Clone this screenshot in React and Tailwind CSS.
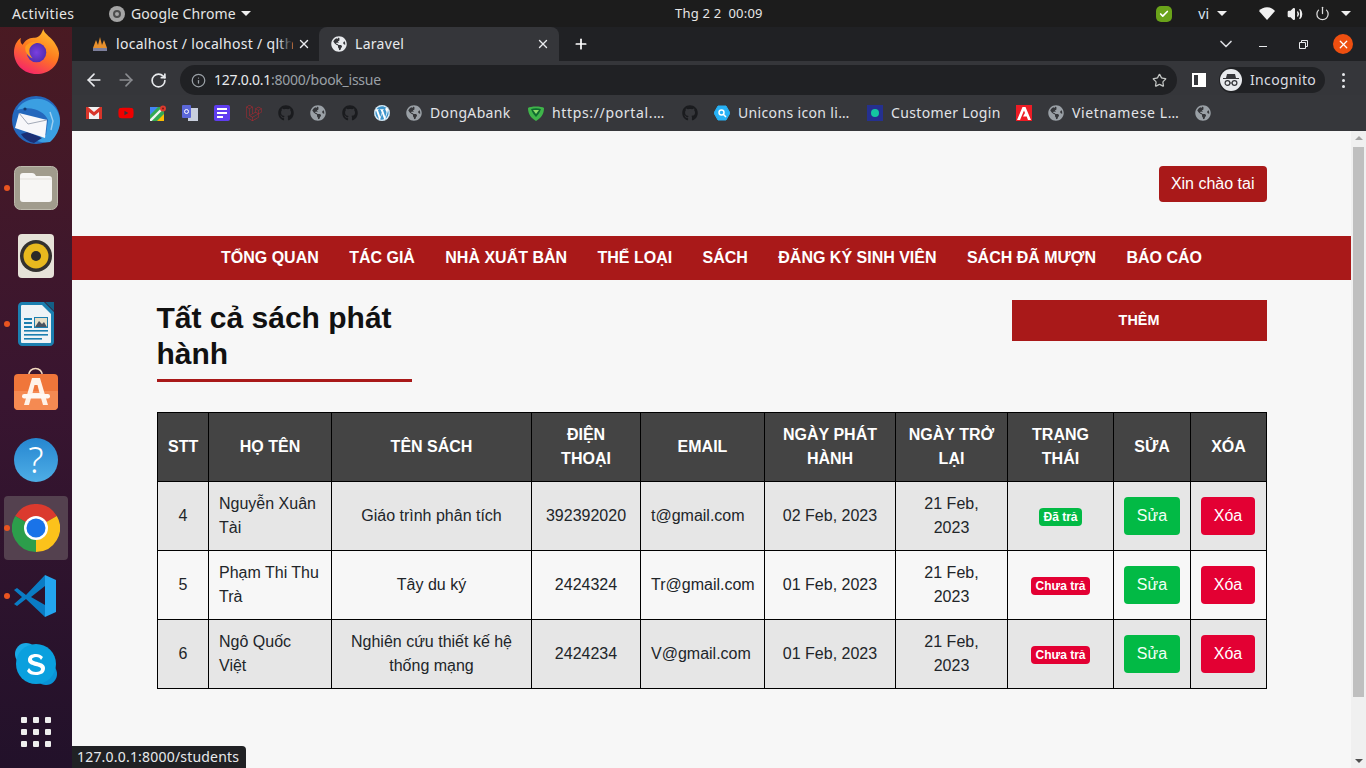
import { ArrowLeft, ArrowRight, RotateCw, Info, Star, X, Plus, ChevronDown, Volume2, Power, Check } from 'lucide-react'
import { FaGithub, FaGlobeAmericas, FaWordpress, FaYoutube } from 'react-icons/fa'
import { SiLaravel } from 'react-icons/si'

const navItems = ['TỔNG QUAN', 'TÁC GIẢ', 'NHÀ XUẤT BẢN', 'THỂ LOẠI', 'SÁCH', 'ĐĂNG KÝ SINH VIÊN', 'SÁCH ĐÃ MƯỢN', 'BÁO CÁO']

const headers = ['STT', 'HỌ TÊN', 'TÊN SÁCH', 'ĐIỆN THOẠI', 'EMAIL', 'NGÀY PHÁT HÀNH', 'NGÀY TRỞ LẠI', 'TRẠNG THÁI', 'SỬA', 'XÓA']
const colWidths = [51, 123, 200, 109, 124, 131, 112, 106, 77, 76]

const rows = [
  { id: 4, name: 'Nguyễn Xuân Tài', book: 'Giáo trình phân tích', phone: '392392020', email: 't@gmail.com', issued: '02 Feb, 2023', back: '21 Feb, 2023', done: true },
  { id: 5, name: 'Phạm Thi Thu Trà', book: 'Tây du ký', phone: '2424324', email: 'Tr@gmail.com', issued: '01 Feb, 2023', back: '21 Feb, 2023', done: false },
  { id: 6, name: 'Ngô Quốc Việt', book: 'Nghiên cứu thiết kế hệ thống mạng', phone: '2424234', email: 'V@gmail.com', issued: '01 Feb, 2023', back: '21 Feb, 2023', done: false },
]

function Caret() {
  return <span className="inline-block w-0 h-0 border-l-[5px] border-r-[5px] border-t-[5px] border-l-transparent border-r-transparent border-t-[#eeeeee]" />
}

function Globe({ color = '#9aa0a6' }) {
  return <FaGlobeAmericas size={16} color={color} />
}

function Firefox() {
  return (
    <svg width="45" height="45" viewBox="0 0 46 46" className="-mt-[2px]">
      <defs>
        <linearGradient id="ffOuter" x1="0.8" y1="0" x2="0.3" y2="1">
          <stop offset="0" stopColor="#ffc22e" />
          <stop offset="0.5" stopColor="#ff7a1f" />
          <stop offset="1" stopColor="#f5236b" />
        </linearGradient>
        <radialGradient id="ffInner" cx="0.5" cy="0.5" r="0.6">
          <stop offset="0" stopColor="#7a3fe0" />
          <stop offset="1" stopColor="#4a2aa8" />
        </radialGradient>
      </defs>
      <path d="M30 0c1 5 6 7 10 12 4 5 6 10 6 13 0 12-10 21-23 21C10 46 0 36 0 24 0 17 3 12 7 9c-1 4 0 6 2 7 2-4 6-7 11-7 4 0 7-1 10-9z" fill="url(#ffOuter)" />
      <circle cx="23" cy="24" r="10" fill="url(#ffInner)" />
      <path d="M12 17c4-4 10-5 15-3-6 0-9 2-11 6-1 3 0 7 3 10-5-2-9-8-7-13z" fill="#ff9a1f" />
    </svg>
  )
}

function Thunderbird() {
  return (
    <svg width="48" height="48" viewBox="0 0 48 48">
      <circle cx="24" cy="24" r="24" fill="#2468bd" />
      <path d="M5 14C10 4 24 0 35 5c8 4 13 12 13 20 0 8-4 16-10 21-6 1-12 0-17-3l13-4 2-15C32 15 20 9 5 14z" fill="#3b9fe2" />
      <path d="M9 38c3 5 8 8 13 9l8-5-14-6z" fill="#1b2f74" />
      <path d="M7 17l28 7-2 18-30-10z" fill="#f7f7fa" />
      <path d="M7 17l9 11 19-4" fill="none" stroke="#a3aab8" strokeWidth="1" />
      <circle cx="13" cy="13" r="1.600" fill="#123a6e" />
      <path d="M38 16l3 9-2 9" fill="none" stroke="#ffffff" strokeWidth="1.400" opacity="0.5" />
    </svg>
  )
}

function Files() {
  return (
    <svg width="44" height="44" viewBox="0 0 44 44">
      <rect x="0.5" y="0.5" width="43" height="43" rx="6" fill="#a19c8d" stroke="#bdb9ac" />
      <path d="M6 10c0-2 1-3 3-3h9c2 0 3 1 4 3h13c2 0 3 1 3 3v20c0 2-1 3-3 3H9c-2 0-3-1-3-3z" fill="#f7f6f4" />
      <path d="M6 13h32" stroke="#e2dfda" strokeWidth="1" />
    </svg>
  )
}

function Rhythmbox() {
  return (
    <svg width="36" height="44" viewBox="0 0 36 44">
      <rect width="36" height="44" rx="4" fill="#e6e2d8" />
      <circle cx="18" cy="22" r="16" fill="#33312e" />
      <circle cx="18" cy="22" r="12.500" fill="#e8b91e" />
      <circle cx="18" cy="22" r="5" fill="#2b2a28" />
    </svg>
  )
}

function Writer() {
  return (
    <svg width="36" height="44" viewBox="0 0 36 44">
      <path d="M4 0h22l10 10v30c0 2-2 4-4 4H4c-2 0-4-2-4-4V4c0-2 2-4 4-4z" fill="#1b7fb0" />
      <path d="M4 3h20l9 9v28c0 1-1 1-1 1H4c-1 0-1-1-1-1V4c0-1 1-1 1-1z" fill="#eef3f6" />
      <path d="M27 0h9v9z" fill="#135f86" />
      <g fill="#1b7fb0">
        <rect x="6" y="16" width="8" height="2" />
        <rect x="6" y="20" width="8" height="2" />
        <rect x="6" y="24" width="8" height="2" />
        <rect x="6" y="28" width="24" height="1.600" />
        <rect x="6" y="32" width="24" height="1.600" />
        <rect x="6" y="36" width="18" height="1.600" />
      </g>
      <rect x="16" y="15" width="14" height="11" fill="#1b7fb0" />
      <rect x="17" y="16" width="12" height="9" fill="#e7dfc8" />
      <path d="M17 25l4-6 3 3 2-2 3 5z" fill="#4a5460" />
    </svg>
  )
}

function AppStore() {
  return (
    <svg width="44" height="44" viewBox="0 0 44 44" className="overflow-visible">
      <path d="M14.500 6c0-10 14-10 14 0" fill="none" stroke="#f3d9bf" strokeWidth="1.600" />
      <rect y="4" width="44" height="36" rx="4" fill="#f0763a" />
      <path d="M0 21h44v15c0 2-2 4-4 4H4c-2 0-4-2-4-4z" fill="#f58a52" />
      <path d="M18 8h8l8 27h-5l-2-7H17l-2 7h-5z M20.500 15l-2 8h7l-2-8z" fill="#fff2e8" fillRule="evenodd" />
      <rect x="8" y="24" width="28" height="4.500" rx="2.200" fill="#fff8f2" />
    </svg>
  )
}

function Help() {
  return (
    <div className="w-[44px] h-[44px] rounded-full bg-gradient-to-b from-[#2586d0] to-[#4eaee6] flex items-center justify-center text-white text-[36px] leading-none font-light font-['Noto_Sans',sans-serif]">
      ?
    </div>
  )
}

function ChromeLogo() {
  return (
    <svg width="48" height="48" viewBox="0 0 48 48">
      <path d="M24 24L3.200 12A24 24 0 0 1 44.800 12z" fill="#db3a2e" />
      <path d="M24 24L44.800 12A24 24 0 0 1 24 48z" fill="#fcc21b" />
      <path d="M24 24L24 48A24 24 0 0 1 3.200 12z" fill="#2c9e4b" />
      <circle cx="24" cy="24" r="12" fill="#ffffff" />
      <circle cx="24" cy="24" r="9.500" fill="#1a73e8" />
    </svg>
  )
}

function VSCode() {
  return (
    <svg width="44" height="44" viewBox="0 0 44 44">
      <path d="M31 1l11 5v32l-11 5z" fill="#23a5ef" />
      <path d="M31 1L12 21 3 14 0 16l8 7-8 7 3 2 9-7 19 18V31L17 23 31 12z" fill="#0a7cc4" />
    </svg>
  )
}

function Skype() {
  return (
    <svg width="44" height="44" viewBox="0 0 44 44">
      <circle cx="12" cy="12" r="11" fill="#19a9e6" />
      <circle cx="32" cy="32" r="11" fill="#0a93d6" />
      <circle cx="22" cy="22" r="20" fill="#0aa0de" />
      <path d="M29 15c-2-2-4-3-7-3-5 0-8 2-8 6 0 7 13 5 13 9 0 2-2 3-5 3s-5-1-7-4l-2 3c2 3 5 4 9 4 5 0 9-2 9-7 0-7-13-5-13-9 0-1 2-2 4-2 3 0 4 1 5 3z" fill="#ffffff" />
    </svg>
  )
}

const dockApps = [
  { key: 'firefox', icon: <Firefox /> },
  { key: 'thunderbird', icon: <Thunderbird /> },
  { key: 'files', icon: <Files />, running: true },
  { key: 'rhythmbox', icon: <Rhythmbox /> },
  { key: 'writer', icon: <Writer />, running: true },
  { key: 'store', icon: <AppStore /> },
  { key: 'help', icon: <Help /> },
  { key: 'chrome', icon: <ChromeLogo />, running: true, active: true },
  { key: 'vscode', icon: <VSCode />, running: true },
  { key: 'skype', icon: <Skype /> },
]

function Dock() {
  return (
    <div className="w-[72px] shrink-0 flex flex-col items-center -mt-[9px] bg-gradient-to-b from-[#4a1a22] via-[#391530] to-[#22112a]">
      {dockApps.map((app) => (
        <div key={app.key} className="relative w-[72px] h-[68px] shrink-0 flex items-center justify-center">
          {app.active && <div className="absolute left-[4px] top-[2px] w-[64px] h-[64px] rounded-[4px] bg-[#54414f]" />}
          {app.running && <div className="absolute left-[4px] top-[31px] w-[6px] h-[6px] rounded-full bg-[#e95420]" />}
          <div className="relative flex">{app.icon}</div>
        </div>
      ))}
      <div className="h-[68px] shrink-0 grid grid-cols-3 content-center gap-x-[6px] gap-y-[6px]">
        {Array.from({ length: 9 }).map((_, i) => (
          <span key={i} className="w-[6px] h-[6px] rounded-[1px] bg-[#eeeeee]" />
        ))}
      </div>
    </div>
  )
}

function TopBar() {
  return (
    <div className="h-[27px] shrink-0 bg-[#1c1c1c] relative flex items-center text-[14px] text-[#e6e6e6] font-['Noto_Sans',sans-serif]">
      <span className="ml-[12px] w-[97px] tracking-[0.4px]">Activities</span>
      <span className="w-[16px] h-[16px] rounded-full bg-[#a5a5a5] flex items-center justify-center">
        <span className="w-[8px] h-[8px] rounded-full border-2 border-[#4c4c4c]" />
      </span>
      <span className="ml-[6px] tracking-[0.1px]">Google Chrome</span>
      <span className="ml-[5px] flex"><Caret /></span>
      <span className="absolute left-[675px] top-[4px] text-[13px] tracking-[0.2px] whitespace-pre">Thg 2 2  00:09</span>
      <div className="ml-auto flex items-center pr-[15px]">
        <span className="w-[16px] h-[16px] rounded-[5px] bg-[#6aa31a] flex items-center justify-center">
          <Check size={10} color="#ffffff" strokeWidth={4} />
        </span>
        <span className="ml-[26px] text-[#dbe8f5]">vi</span>
        <span className="ml-[8px] flex"><Caret /></span>
        <svg className="ml-[32px]" width="16" height="13" viewBox="0 0 16 13">
          <path d="M0 4c4-5 12-5 16 0l-8 9z" fill="#f2f2f2" />
        </svg>
        <Volume2 className="ml-[12px]" size={16} color="#eeeeee" fill="#eeeeee" />
        <Power className="ml-[12px]" size={15} color="#dddddd" />
        <span className="ml-[11px] flex"><Caret /></span>
      </div>
    </div>
  )
}

function TabStrip() {
  return (
    <div className="h-[34px] shrink-0 bg-[#202124] flex items-stretch text-[14px] text-[#e8eaed] tracking-[0.3px]">
      <div className="w-[247px] flex items-center pl-[20px] pr-[8px]">
        <svg width="16" height="16" viewBox="0 0 16 16" className="shrink-0">
          <path d="M1 12L4 4l2 5 2-8 2 8 2-5 3 8z" fill="#e8912d" />
          <rect x="1" y="12" width="14" height="3" fill="#7d7f9c" />
        </svg>
        <span className="relative ml-[8px] w-[176px] pb-[2px] whitespace-nowrap">
          localhost / localhost / qlth
          <span className="absolute right-0 top-0 bottom-0 w-[14px] bg-gradient-to-r from-transparent to-[#202124]" />
        </span>
        <X className="ml-auto" size={14} strokeWidth={2.4} color="#e8eaed" />
      </div>
      <div className="w-[240px] bg-[#35363a] rounded-t-[8px] flex items-center pl-[12px] pr-[9px]">
        <Globe color="#e8eaed" />
        <span className="ml-[8px] pb-[2px]">Laravel</span>
        <X className="ml-auto" size={14} strokeWidth={2.4} color="#e8eaed" />
      </div>
      <div className="ml-[14px] flex items-center">
        <Plus size={16} strokeWidth={2.6} color="#ffffff" />
      </div>
      <div className="ml-auto flex items-center">
        <ChevronDown size={20} color="#dadce0" className="mr-[23px]" />
        <span className="w-[8px] h-[1px] bg-[#e8eaed] mt-[5px] mr-[32px]" />
        <svg width="9" height="9" viewBox="0 0 9 9" className="mr-[25px]">
          <path d="M2.500 2.500V.5h6v6h-2M.5 2.500h6v6h-6z" fill="none" stroke="#e8eaed" />
        </svg>
        <div className="w-[20px] h-[20px] rounded-full bg-[#ee4f10] flex items-center justify-center mr-[13px]">
          <X size={13} strokeWidth={2.4} color="#ffffff" />
        </div>
      </div>
    </div>
  )
}

function Toolbar() {
  return (
    <div className="h-[34px] shrink-0 bg-[#35363a] flex items-start text-[14px]">
      <div className="flex items-center h-[38px] pl-[12px]">
        <ArrowLeft size={20} color="#e8eaed" />
        <ArrowRight size={20} color="#8a8c90" className="ml-[12px]" />
        <RotateCw size={17} strokeWidth={2.4} color="#e8eaed" className="ml-[14px]" />
      </div>
      <div className="ml-[13px] mt-[4px] w-[997px] h-[30px] rounded-full bg-[#202124] flex items-center pl-[11px] pr-[10px]">
        <Info size={15} color="#9aa0a6" />
        <span className="ml-[8px] pb-[2px] text-[#e8eaed] tracking-[-0.25px]">127.0.0.1</span>
        <span className="pb-[2px] text-[#9aa0a6] tracking-[-0.25px]">:8000/book_issue</span>
        <Star size={15} color="#c4c7c5" className="ml-auto" />
      </div>
      <div className="ml-[15px] flex items-center h-[38px]">
        <div className="w-[14px] h-[14px] border-2 border-white flex justify-end">
          <div className="w-[6px] bg-white" />
        </div>
        <div className="ml-[13px] w-[106px] h-[26px] rounded-full bg-[#202124] flex items-center pl-[1px] text-[#dadce0]">
          <span className="w-[22px] h-[22px] rounded-full bg-[#e8eaed] flex items-center justify-center">
            <svg width="16" height="14" viewBox="0 0 16 14">
              <path d="M4 1h8l1 4h3v1H0V5h3z" fill="#35363a" />
              <circle cx="4.500" cy="10" r="2.400" fill="none" stroke="#35363a" strokeWidth="1.200" />
              <circle cx="11.500" cy="10" r="2.400" fill="none" stroke="#35363a" strokeWidth="1.200" />
              <path d="M7 10h2" stroke="#35363a" strokeWidth="1.200" />
            </svg>
          </span>
          <span className="ml-[8px] pb-[2px] tracking-[0.35px]">Incognito</span>
        </div>
        <div className="ml-[17px] flex flex-col gap-[3px]">
          <span className="w-[3px] h-[3px] rounded-full bg-[#e8eaed]" />
          <span className="w-[3px] h-[3px] rounded-full bg-[#e8eaed]" />
          <span className="w-[3px] h-[3px] rounded-full bg-[#e8eaed]" />
        </div>
      </div>
    </div>
  )
}

function Gmail() {
  return (
    <svg width="16" height="14" viewBox="0 0 16 14">
      <rect y="1" width="16" height="12" fill="#f1f1f1" />
      <path d="M0 1h2l6 5 6-5h2v12h-3V6L8 10 3 6v7H0z" fill="#d8352a" />
    </svg>
  )
}

function Maps() {
  return (
    <svg width="16" height="16" viewBox="0 0 16 16">
      <rect y="2" width="14" height="14" fill="#34a853" />
      <path d="M0 2h8L0 10z" fill="#4285f4" />
      <path d="M14 16H7l7-7z" fill="#fbbc04" />
      <path d="M0 16L14 2" stroke="#f1f3f4" strokeWidth="2.400" />
      <circle cx="13" cy="3.500" r="3" fill="#db3a2e" />
      <circle cx="13" cy="3.500" r="1" fill="#7a1a14" />
    </svg>
  )
}

function Translate() {
  return (
    <svg width="16" height="16" viewBox="0 0 16 16">
      <rect x="6" y="3" width="10" height="13" fill="#c9cfdd" />
      <rect width="9" height="13" rx="1" fill="#5b67d8" />
      <circle cx="4.500" cy="6.500" r="2" fill="none" stroke="#ffffff" strokeWidth="1" />
    </svg>
  )
}

function Docs() {
  return (
    <div className="w-[16px] h-[16px] rounded-[2px] bg-[#5f3df0] flex flex-col justify-center gap-[2px] pl-[3px]">
      <span className="w-[10px] h-[2px] bg-white" />
      <span className="w-[10px] h-[2px] bg-white" />
      <span className="w-[6px] h-[2px] bg-white" />
    </div>
  )
}

function Vcb() {
  return (
    <svg width="16" height="16" viewBox="0 0 16 16">
      <path d="M0 3c2-2 14-2 16 0 0 6-3 10-8 13C3 13 0 9 0 3z" fill="#3fb54a" />
      <path d="M3 4c3-1 7-1 10 0-1 3-3 6-5 8-2-2-4-5-5-8z" fill="#0f6a30" />
      <path d="M5 5h6l-3 4z" fill="#8fdc6a" />
    </svg>
  )
}

function Unicons() {
  return (
    <svg width="16" height="16" viewBox="0 0 16 16">
      <path d="M4 1h8l4 7-4 7H4L0 8z" fill="#27b1f5" stroke="#27b1f5" strokeLinejoin="round" />
      <circle cx="7.500" cy="7.500" r="2.500" fill="none" stroke="#ffffff" strokeWidth="1.500" />
      <path d="M9.500 9.500L12 12" stroke="#ffffff" strokeWidth="1.500" />
    </svg>
  )
}

function CustomerLogin() {
  return (
    <div className="w-[16px] h-[16px] bg-[#25308f] flex items-center justify-center">
      <span className="w-[8px] h-[8px] rounded-full bg-[#14c8a0]" />
    </div>
  )
}

function Adobe() {
  return (
    <svg width="16" height="16" viewBox="0 0 16 16">
      <rect width="16" height="16" fill="#ee1c25" />
      <path d="M6.500 2h3L15 15h-3l-1.300-3.500H7L9 8 8 5.500 4 15H1z" fill="#ffffff" />
    </svg>
  )
}

const bookmarks = [
  { icon: <Gmail /> },
  { icon: <FaYoutube size={16} color="#f00000" /> },
  { icon: <Maps /> },
  { icon: <Translate /> },
  { icon: <Docs /> },
  { icon: <SiLaravel size={16} color="#b32830" /> },
  { icon: <FaGithub size={16} color="#1a1b1e" /> },
  { icon: <Globe /> },
  { icon: <FaGithub size={16} color="#1a1b1e" /> },
  { icon: <FaWordpress size={16} color="#3f96cc" className="bg-white rounded-full" /> },
  { icon: <Globe />, label: 'DongAbank', width: 'w-[81px]' },
  { icon: <Vcb />, label: 'https://portal.…', width: 'w-[113px] tracking-[0.65px]' },
  { icon: <FaGithub size={16} color="#1a1b1e" /> },
  { icon: <Unicons />, label: 'Unicons icon li…', width: 'w-[112px]' },
  { icon: <CustomerLogin />, label: 'Customer Login', width: 'w-[108px]' },
  { icon: <Adobe /> },
  { icon: <Globe />, label: 'Vietnamese L…', width: 'w-[106px] tracking-[0.65px]' },
  { icon: <Globe /> },
]

function BookmarkBar() {
  return (
    <div className="h-[36px] shrink-0 bg-[#36373b] flex items-center pl-[6px] text-[14px] text-[#e2e4e8] tracking-[0.35px]">
      {bookmarks.map((b, i) => (
        <div key={i} className={`flex items-center px-[8px] ${b.label ? 'pr-[9px]' : ''}`}>
          <span className="w-[16px] h-[16px] flex items-center justify-center shrink-0">{b.icon}</span>
          {b.label && <span className={`ml-[8px] pb-[2px] whitespace-nowrap ${b.width}`}>{b.label}</span>}
        </div>
      ))}
    </div>
  )
}

function StatusBadge({ done }) {
  return (
    <span className={`inline-block align-middle rounded-[4px] px-[4px] text-[12px] leading-[18px] font-bold text-white ${done ? 'bg-[#02ba45]' : 'bg-[#e30033]'}`}>
      {done ? 'Đã trả' : 'Chưa trả'}
    </span>
  )
}

function BookTable() {
  return (
    <table className="w-[1109px] table-fixed border-collapse text-[16px] leading-[24px] text-[#212529]">
      <colgroup>
        {colWidths.map((w, i) => (
          <col key={i} width={w} />
        ))}
      </colgroup>
      <thead>
        <tr className="bg-[#444444] text-white">
          {headers.map((h) => (
            <th key={h} className="border border-black p-[10px] font-bold text-center">{h}</th>
          ))}
        </tr>
      </thead>
      <tbody>
        {rows.map((r, i) => (
          <tr key={r.id} className={i % 2 === 0 ? 'bg-[#e6e6e6]' : 'bg-[#f7f7f7]'}>
            <td className="border border-black p-[10px] text-center">{r.id}</td>
            <td className="border border-black p-[10px]">{r.name}</td>
            <td className="border border-black p-[10px] text-center">{r.book}</td>
            <td className="border border-black p-[10px] text-center">{r.phone}</td>
            <td className="border border-black p-[10px]">{r.email}</td>
            <td className="border border-black p-[10px] text-center">{r.issued}</td>
            <td className="border border-black p-[10px] text-center">{r.back}</td>
            <td className="border border-black p-[10px] text-center"><StatusBadge done={r.done} /></td>
            <td className="border border-black p-[10px] text-center">
              <button className="block w-[56px] h-[38px] rounded-[4px] bg-[#02ba45] text-[#f2fff6]">Sửa</button>
            </td>
            <td className="border border-black p-[10px] text-center">
              <button className="block w-[54px] h-[38px] rounded-[4px] bg-[#e30033] text-white">Xóa</button>
            </td>
          </tr>
        ))}
      </tbody>
    </table>
  )
}

function Page() {
  return (
    <div className="flex-1 min-h-0 flex bg-[#f7f7f7]">
      <div className="flex-1 min-w-0 font-['Liberation_Sans',Arial,sans-serif]">
        <div className="w-[1110px] mx-auto pt-[35px] pb-[34px] flex justify-end">
          <a className="h-[36px] px-[12px] rounded-[4px] bg-[#a91919] text-white text-[16px] flex items-center">Xin chào tai</a>
        </div>
        <nav className="h-[44px] bg-[#a91919] flex items-center justify-center gap-[30.4px] text-white text-[16px] font-bold">
          {navItems.map((item) => (
            <a key={item} className="whitespace-nowrap">{item}</a>
          ))}
        </nav>
        <div className="w-[1110px] mx-auto pt-[20px]">
          <div className="flex justify-between items-start">
            <div className="w-[255px] border-b-[3px] border-[#a91919] pb-[7px]">
              <h1 className="text-[30px] leading-[36px] font-bold text-[#111111]">Tất cả sách phát hành</h1>
            </div>
            <button className="w-[255px] h-[41px] bg-[#a91919] text-white text-[14.4px] font-bold">THÊM</button>
          </div>
          <div className="mt-[30px] ml-[0.5px]">
            <BookTable />
          </div>
        </div>
      </div>
      <div className="w-[15px] shrink-0 bg-[#f0f0f0] flex flex-col items-center relative">
        <span className="mt-[5px] w-0 h-0 border-l-[4px] border-r-[4px] border-b-[4px] border-l-transparent border-r-transparent border-b-[#a3a3a3]" />
        <div className="mt-[7px] w-[11px] h-[550px] bg-[#bfbfbf]" />
        <span className="mt-auto mb-[5px] w-0 h-0 border-l-[4px] border-r-[4px] border-t-[4px] border-l-transparent border-r-transparent border-t-[#505050]" />
      </div>
    </div>
  )
}

export default function App() {
  return (
    <div className="relative h-screen w-screen overflow-hidden flex flex-col bg-[#1c1c1c] font-['Noto_Sans',sans-serif]">
      <TopBar />
      <div className="flex-1 min-h-0 flex">
        <Dock />
        <div className="flex-1 min-w-0 flex flex-col">
          <TabStrip />
          <Toolbar />
          <BookmarkBar />
          <Page />
        </div>
      </div>
      <div className="absolute left-[72px] bottom-0 h-[22px] w-[174px] rounded-tr-[4px] bg-[#202124] text-[#e8eaed] text-[14px] leading-[22px] pl-[5px] tracking-[0.2px] whitespace-nowrap">
        127.0.0.1:8000/students
      </div>
    </div>
  )
}
